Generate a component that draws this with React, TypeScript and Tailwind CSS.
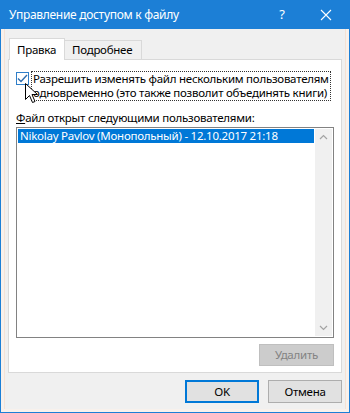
import React from 'react'

// Windows 10 style "share workbook" dialog

const font = { fontFamily: '"Noto Sans", "Segoe UI", sans-serif' }

function Cursor() {
  return (
    <svg width="13" height="21" viewBox="0 0 13 21" className="absolute left-[25px] top-[83px]">
      <path
        d="M0.5 0.5 L0.5 16.5 L4.5 12.5 L7.5 19.5 L10 18.5 L7 11.5 L12.5 11.5 Z"
        fill="#fff"
        stroke="#000"
        strokeWidth="1"
      />
    </svg>
  )
}

function Chevron({ up }: { up?: boolean }) {
  return (
    <svg width="9" height="6" viewBox="0 0 9 6">
      <path
        d={up ? 'M1 5 L4.5 1.5 L8 5' : 'M1 1 L4.5 4.5 L8 1'}
        fill="none"
        stroke="#a3a3a3"
        strokeWidth="1.2"
      />
    </svg>
  )
}

export default function App() {
  return (
    <div
      className="relative flex h-[413px] w-[350px] flex-col whitespace-nowrap bg-[#1c7fd6] px-px pb-px text-[11.5px] tracking-[-0.25px] text-black"
      style={font}
    >
      {/* title bar */}
      <div className="flex h-[29px] items-center justify-between pl-[8px] text-white">
        <span className="text-[12px] leading-none tracking-[-0.3px]">Управление доступом к файлу</span>
        <div className="flex items-center">
          <span className="w-[46px] pl-[4px] text-center text-[13px]">?</span>
          <svg width="46" height="12" viewBox="0 0 46 12">
            <path d="M18 1 L28 11 M28 1 L18 11" stroke="#fff" strokeWidth="1.1" />
          </svg>
        </div>
      </div>

      {/* client */}
      <div className="flex flex-1 flex-col bg-[#f8f1ec] px-[3px] pb-[3px]">
        <div className="flex flex-1 flex-col border-x border-[#f4e2d5] bg-[#f0f0f0] px-[3px]">
          {/* tabs */}
          <div className="mt-[9px] flex items-end pl-px">
            <div className="relative z-10 -mb-px flex h-[22px] w-[56px] items-center border border-b-0 border-[#d9d9d9] bg-white pl-[7px]">
              Правка
            </div>
            <div className="flex h-[19px] w-[77px] items-center border border-b-0 border-l-0 border-[#d9d9d9] bg-[#f0f0f0] pl-[7px]">
              Подробнее
            </div>
          </div>

          {/* panel */}
          <div className="relative flex h-[314px] flex-col border border-[#d9d9d9] bg-white px-[7px]">
            <div className="mt-[11px] flex items-start">
              <div className="mt-[1px] flex h-[13px] w-[13px] shrink-0 items-center justify-center border border-[#2f7fc9] bg-white">
                <svg width="11" height="9" viewBox="0 0 11 9">
                  <path d="M1 4.5 L4 7.5 L10 1" fill="none" stroke="#2d6cad" strokeWidth="1.4" />
                </svg>
              </div>
              <div className="ml-[2px] border border-dotted border-[#333] px-px leading-[14px]">
                <div>Разрешить изменять файл нескольким пользователям</div>
                <div>одновременно (это также позволит объединять книги)</div>
              </div>
            </div>

            <div className="mt-[9px] leading-[16px]">
              <span className="underline">Ф</span>айл открыт следующими пользователями:
            </div>

            <div className="mt-[1px] flex h-[211px] w-[318px] border border-[#828282] bg-white p-px">
              <div className="flex-1 pr-px">
                <div className="flex h-[14px] items-center bg-[#0078d7] pl-[2px] text-white">
                  Nikolay Pavlov (Монопольный) - 12.10.2017 21:18
                </div>
              </div>
              <div className="flex w-[17px] flex-col items-center justify-between bg-[#f0f0f0] py-[5px]">
                <Chevron up />
                <Chevron />
              </div>
            </div>

            <div className="mt-[6px] flex w-[318px] justify-end">
              <div className="flex h-[22px] w-[75px] items-center justify-center border border-[#bfbfbf] bg-[#cccccc] text-[#838383]">
                Удалить
              </div>
            </div>
          </div>

          {/* buttons */}
          <div className="mt-[7px] flex justify-end gap-[9px]">
            <div className="flex h-[23px] w-[74px] items-center justify-center border-2 border-[#0078d7] bg-[#e1e1e1]">
              OK
            </div>
            <div className="flex h-[23px] w-[74px] items-center justify-center border border-[#adadad] bg-[#e1e1e1]">
              Отмена
            </div>
          </div>
        </div>
      </div>

      <Cursor />
    </div>
  )
}
